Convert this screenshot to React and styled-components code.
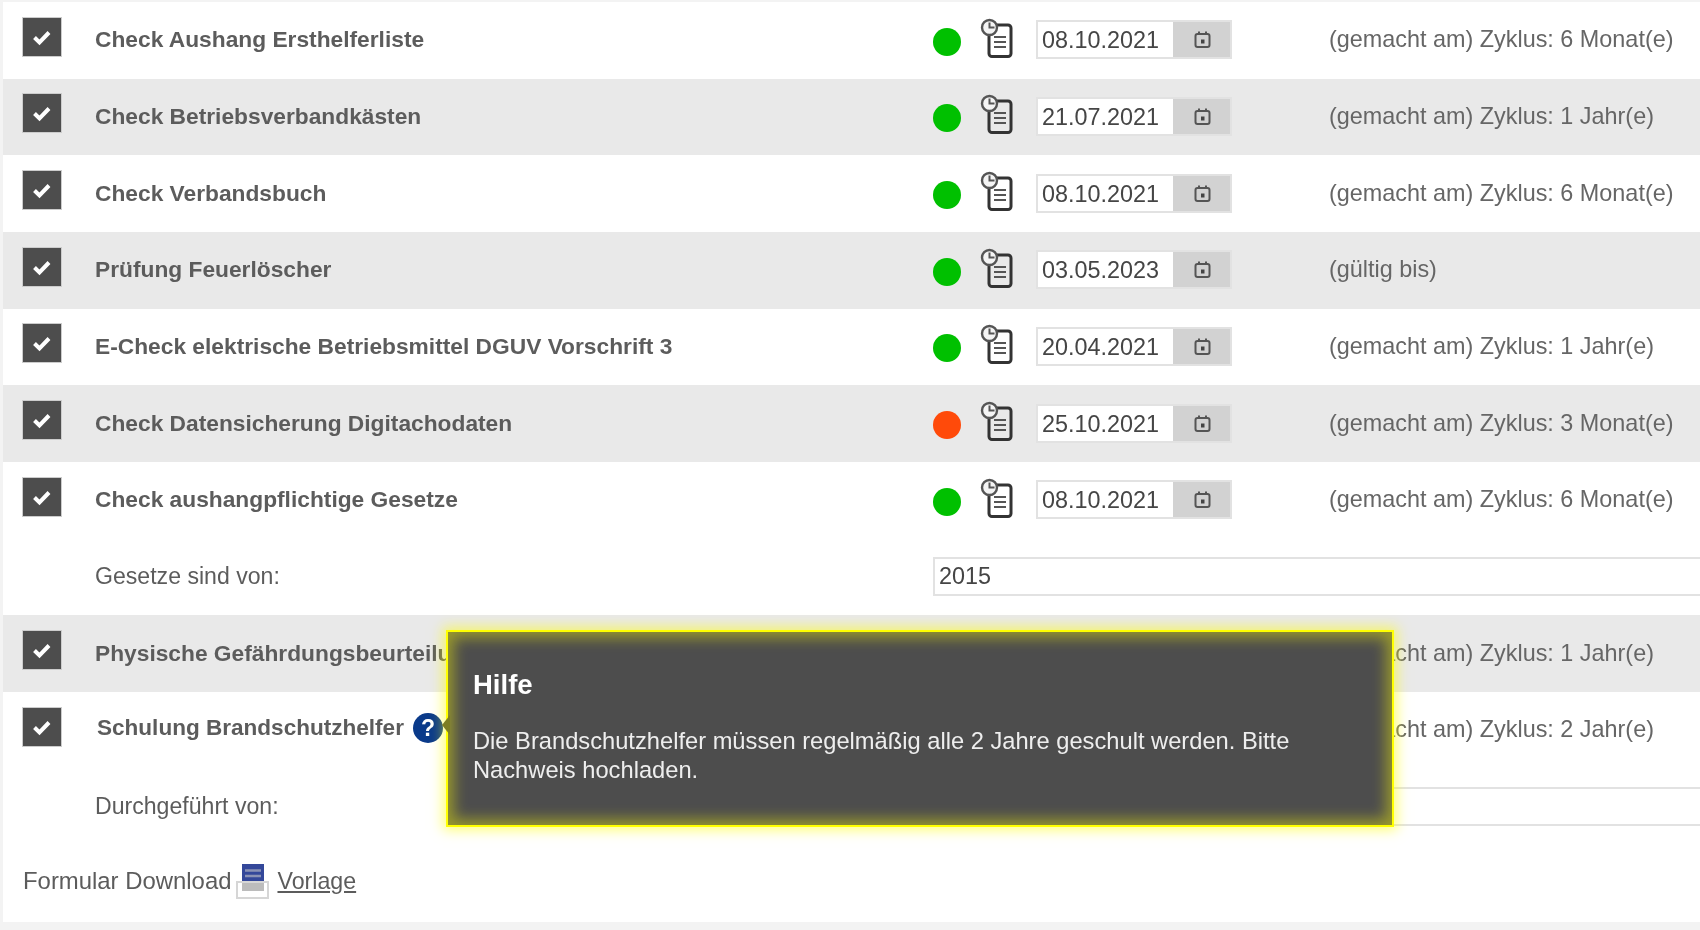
import React from "react";
import styled, { createGlobalStyle } from "styled-components";

const rows = [
  { label: "Check Aushang Ersthelferliste", date: "08.10.2021", note: "(gemacht am) Zyklus: 6 Monat(e)" },
  { label: "Check Betriebsverbandkästen", date: "21.07.2021", note: "(gemacht am) Zyklus: 1 Jahr(e)", shaded: true },
  { label: "Check Verbandsbuch", date: "08.10.2021", note: "(gemacht am) Zyklus: 6 Monat(e)" },
  { label: "Prüfung Feuerlöscher", date: "03.05.2023", note: "(gültig bis)", shaded: true },
  { label: "E-Check elektrische Betriebsmittel DGUV Vorschrift 3", date: "20.04.2021", note: "(gemacht am) Zyklus: 1 Jahr(e)" },
  { label: "Check Datensicherung Digitachodaten", date: "25.10.2021", note: "(gemacht am) Zyklus: 3 Monat(e)", shaded: true, late: true },
  { label: "Check aushangpflichtige Gesetze", date: "08.10.2021", note: "(gemacht am) Zyklus: 6 Monat(e)", extra: { label: "Gesetze sind von:", value: "2015" } },
  // the date of these two rows lies under the tooltip, so it stays empty
  { label: "Physische Gefährdungsbeurteilung", date: "", note: "(gemacht am) Zyklus: 1 Jahr(e)", shaded: true },
  { label: "Schulung Brandschutzhelfer", date: "", note: "(gemacht am) Zyklus: 2 Jahr(e)", help: true, extra: { label: "Durchgeführt von:", value: "" } },
];

const CheckIcon = () => (
  <svg width="20" height="20" viewBox="0 0 20 20" fill="none">
    <path d="M2.5 10.5 L7.5 15.5 L17 5.5" stroke="#fff" strokeWidth="4" />
  </svg>
);

const ClockDocIcon = () => (
  <svg width="33" height="40" viewBox="0 0 33 40" fill="none">
    <rect x="9" y="7" width="22" height="31.5" rx="3" stroke="#333" strokeWidth="3" fill="none" />
    <path d="M14 19 H26 M14 24 H26 M14 29 H26" stroke="#555" strokeWidth="2.2" />
    <circle cx="9.5" cy="9.5" r="7.5" stroke="#555" strokeWidth="2.4" fill="#f4f4f4" />
    <path d="M9.5 4.5 V9.5 H14.5" stroke="#555" strokeWidth="2" />
  </svg>
);

const CalendarIcon = () => (
  <svg width="17" height="17" viewBox="0 0 17 17" fill="none">
    <rect x="1.5" y="3" width="14" height="13" rx="2" stroke="#555" strokeWidth="2" />
    <path d="M5 0.5 V4 M12 0.5 V4" stroke="#555" strokeWidth="2" />
    <rect x="7" y="8.5" width="3.5" height="4" fill="#444" />
  </svg>
);

const TrayIcon = () => (
  <svg width="34" height="35" viewBox="0 0 34 35" fill="none">
    <rect x="6" y="0" width="22" height="17" fill="#34489a" />
    <path d="M9 6.5 H25 M9 12 H25" stroke="#8b93b5" strokeWidth="2.4" />
    <rect x="6" y="17" width="22" height="10" fill="#bcbcbc" />
    <rect x="1" y="18" width="31" height="16" stroke="#d6d6d6" strokeWidth="2" fill="none" />
  </svg>
);

const HelpIcon = () => (
  <svg width="30" height="30" viewBox="0 0 30 30">
    <circle cx="15" cy="15" r="15" fill="#0a3a8a" />
    <text x="15" y="23" textAnchor="middle" fontFamily="Liberation Sans, sans-serif" fontWeight="700" fontSize="23" fill="#fff">?</text>
  </svg>
);

const Row = ({ item }) => (
  <RowGroup $shaded={item.shaded}>
    <MainRow>
      <CheckBox><CheckIcon /></CheckBox>
      <Label $help={item.help}>
        {item.label}
        {item.help && <HelpButton><HelpIcon /></HelpButton>}
      </Label>
      <StatusDot $late={item.late} />
      <IconCell><ClockDocIcon /></IconCell>
      <DateField>
        <DateValue>{item.date}</DateValue>
        <DateButton><CalendarIcon /></DateButton>
      </DateField>
      <Note>{item.note}</Note>
    </MainRow>
    {item.extra && (
      <ExtraRow>
        <ExtraLabel>{item.extra.label}</ExtraLabel>
        <TextField>{item.extra.value}</TextField>
      </ExtraRow>
    )}
  </RowGroup>
);

export default function App() {
  return (
    <Page>
      <GlobalStyle />
      <Panel>
        {rows.map((item) => (
          <Row key={item.label} item={item} />
        ))}
        <Footer>
          <span>Formular Download</span>
          <TrayIcon />
          <Link>Vorlage</Link>
        </Footer>
        <Tooltip>
          <TooltipArrow />
          <TooltipTitle>Hilfe</TooltipTitle>
          <TooltipText>
            Die Brandschutzhelfer müssen regelmäßig alle 2 Jahre geschult werden. Bitte Nachweis hochladen.
          </TooltipText>
        </Tooltip>
      </Panel>
    </Page>
  );
}

const GlobalStyle = createGlobalStyle`
  html, body {
    margin: 0;
    padding: 0;
    width: 1700px;
    height: 930px;
    overflow: hidden;
    background: #f3f3f3;
  }
`;

const Page = styled.div`
  width: 1700px;
  height: 930px;
  padding: 2px 0 8px 3px;
  box-sizing: border-box;
  background: #f3f3f3;
  font-family: "Liberation Sans", Arial, sans-serif;
  font-size: 23.4px;
  color: #5a5a5a;
  filter: blur(0.6px);
`;

const Panel = styled.div`
  position: relative;
  height: 920px;
  background: #fff;
  overflow: hidden;
`;

const RowGroup = styled.div`
  background: ${(p) => (p.$shaded ? "#e9e9e9" : "#fff")};
`;

const MainRow = styled.div`
  display: grid;
  grid-template-columns: 92px 838px 48px 55px 293px 1fr;
  align-items: center;
  height: 76.67px;
`;

const CheckBox = styled.div`
  width: 38px;
  height: 38px;
  margin: -7px 0 0 20px;
  box-sizing: border-box;
  display: flex;
  align-items: center;
  justify-content: center;
  background: #4d4d4d;
  box-shadow: 0 0 0 1px #ccc;
`;

const Label = styled.div`
  display: flex;
  align-items: center;
  font-size: ${(p) => (p.$help ? "22.55px" : "22.75px")};
  font-weight: 700;
  color: #5c5c5c;
  margin-left: ${(p) => (p.$help ? "2px" : "0")};
  margin-top: ${(p) => (p.$help ? "-5px" : "-1px")};
  white-space: nowrap;
`;

const HelpButton = styled.span`
  display: inline-flex;
  margin-left: 9px;
`;

const StatusDot = styled.span`
  width: 28px;
  height: 28px;
  margin-top: 3px;
  border-radius: 50%;
  background: ${(p) => (p.$late ? "#ff4a0a" : "#00c000")};
`;

const IconCell = styled.div`
  display: flex;
  margin: -5px 0 0 -1px;
`;

const DateField = styled.div`
  display: flex;
  width: 196px;
  height: 39px;
  margin-top: -1px;
  box-sizing: border-box;
  border: 2px solid #e2e2e2;
  background: #fff;
`;

const DateValue = styled.div`
  width: 135px;
  padding-left: 4px;
  box-sizing: border-box;
  line-height: 36px;
  color: #454545;
`;

const DateButton = styled.div`
  flex: 1;
  display: flex;
  align-items: center;
  justify-content: center;
  padding-left: 2px;
  background: #d2d2d2;
`;

const Note = styled.div`
  margin-top: -1px;
  color: #666;
  white-space: nowrap;
`;

const ExtraRow = styled.div`
  display: grid;
  grid-template-columns: 930px 1fr;
  align-items: center;
  height: 76.67px;
`;

const ExtraLabel = styled.div`
  padding-left: 92px;
  font-size: 23.1px;
  color: #5c5c5c;
`;

const TextField = styled.div`
  width: 900px;
  height: 39px;
  padding-left: 4px;
  box-sizing: border-box;
  border: 2px solid #e2e2e2;
  background: #fff;
  line-height: 35px;
  color: #454545;
`;

const Footer = styled.div`
  display: flex;
  align-items: center;
  gap: 5px;
  height: 72px;
  padding: 0 0 0 20px;
  font-size: 23.9px;
  color: #5c5c5c;
`;

const Link = styled.span`
  margin-left: 2px;
  font-size: 23.2px;
  text-decoration: underline;
`;

const Tooltip = styled.div`
  position: absolute;
  left: 443px;
  top: 628px;
  width: 948px;
  height: 197px;
  padding: 38px 24px 0 25px;
  box-sizing: border-box;
  border: 2px solid #ffff00;
  background: #4d4d4d;
  box-shadow: 0 0 12px 3px rgba(255, 255, 0, 0.55), inset 0 0 14px 6px rgba(255, 255, 0, 0.42);
  color: #eee;
`;

const TooltipArrow = styled.span`
  position: absolute;
  left: -6px;
  top: 83px;
  border-style: solid;
  border-width: 10px 8px 10px 0;
  border-color: transparent #7d7d22 transparent transparent;
`;

const TooltipTitle = styled.div`
  font-size: 27.5px;
  font-weight: 700;
  line-height: 30px;
  color: #fff;
  margin-bottom: 27px;
`;

const TooltipText = styled.div`
  font-size: 23.7px;
  line-height: 29px;
`;
